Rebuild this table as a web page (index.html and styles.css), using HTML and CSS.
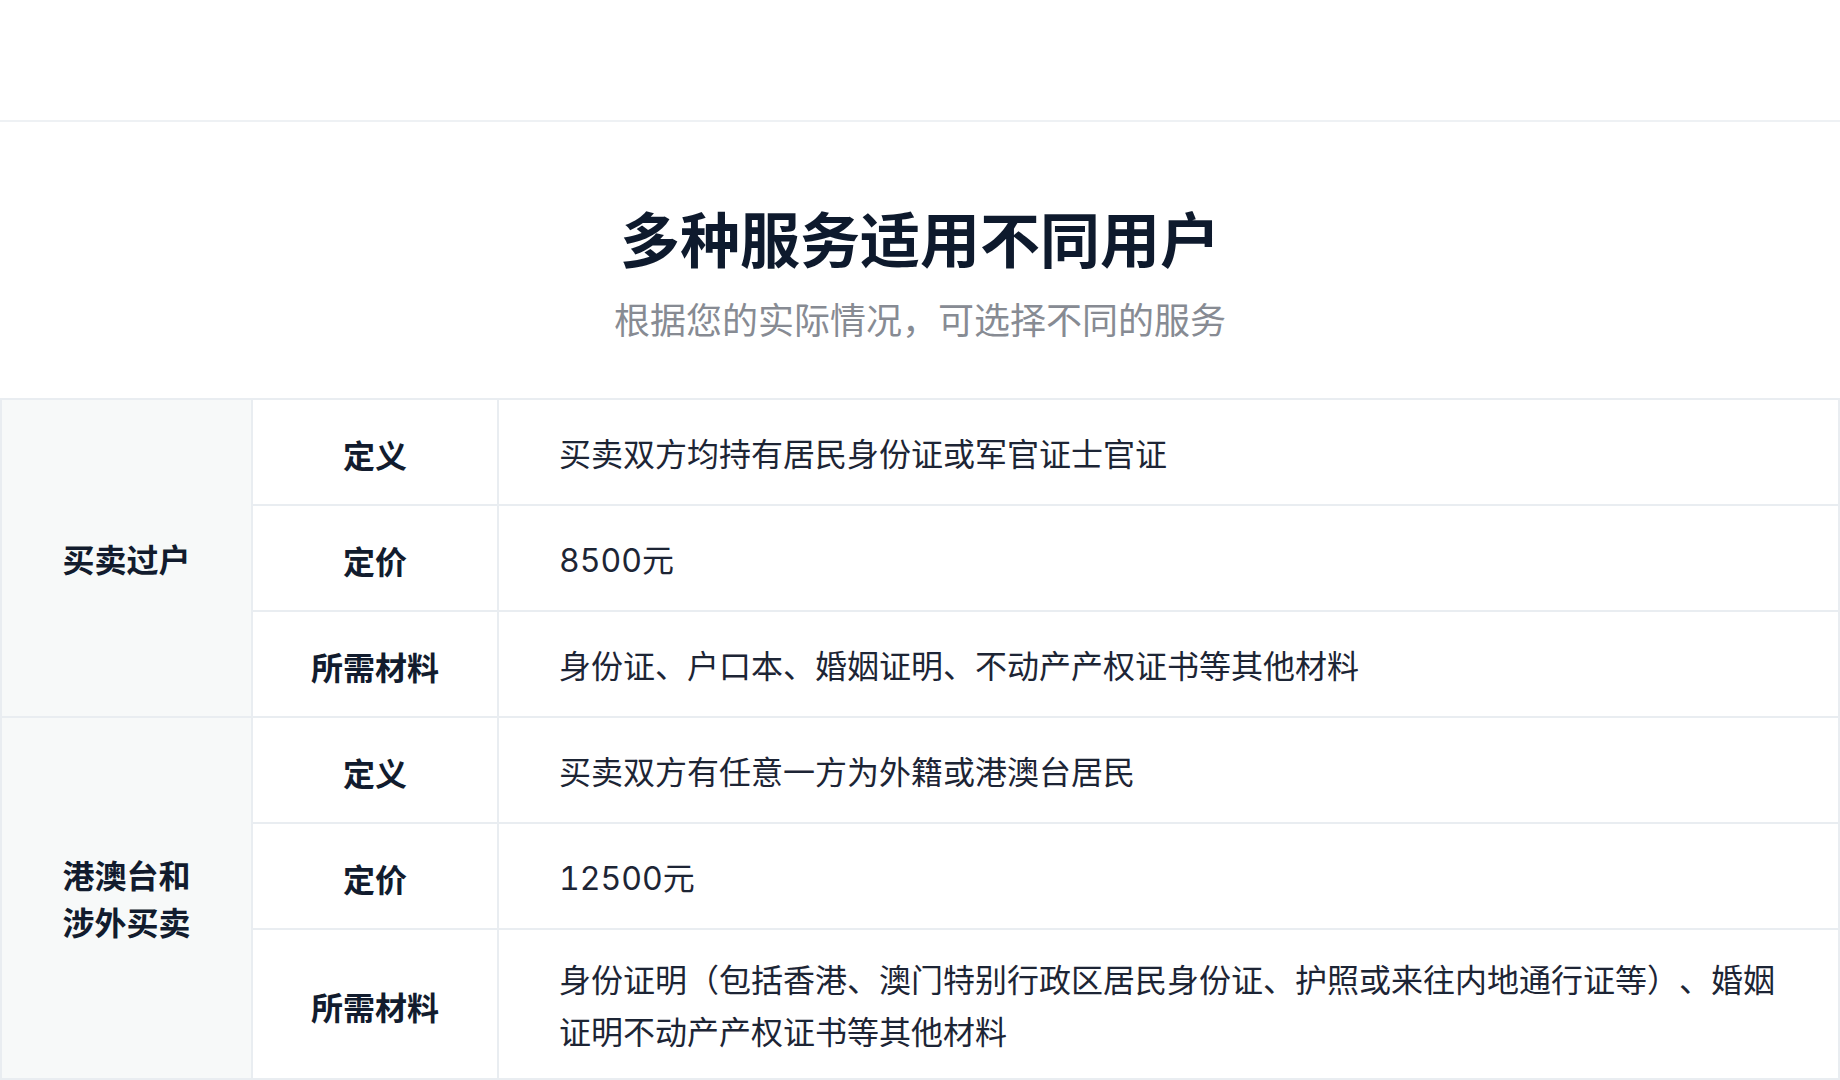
FILE: index.html
```html
<!DOCTYPE html>
<html lang="zh-CN">
<head>
<meta charset="utf-8">
<title>多种服务适用不同用户</title>
<link rel="stylesheet" href="styles.css">
</head>
<body>
<header class="topbar"></header>
<section class="services">
  <div class="intro">
    <h1 class="title">多种服务适用不同用户</h1>
    <p class="subtitle">根据您的实际情况，可选择不同的服务</p>
  </div>
  <table class="price-table">
    <colgroup>
      <col class="col-cat">
      <col class="col-label">
      <col class="col-text">
    </colgroup>
    <tbody>
      <tr>
        <th class="cat" rowspan="3">买卖过户</th>
        <th class="label">定义</th>
        <td class="text">买卖双方均持有居民身份证或军官证士官证</td>
      </tr>
      <tr>
        <th class="label">定价</th>
        <td class="text">8500元</td>
      </tr>
      <tr>
        <th class="label">所需材料</th>
        <td class="text">身份证、户口本、婚姻证明、不动产产权证书等其他材料</td>
      </tr>
      <tr>
        <th class="cat" rowspan="3">港澳台和涉外买卖</th>
        <th class="label">定义</th>
        <td class="text">买卖双方有任意一方为外籍或港澳台居民</td>
      </tr>
      <tr>
        <th class="label">定价</th>
        <td class="text">12500元</td>
      </tr>
      <tr>
        <th class="label">所需材料</th>
        <td class="text">身份证明（包括香港、澳门特别行政区居民身份证、护照或来往内地通行证等）、婚姻证明不动产产权证书等其他材料</td>
      </tr>
    </tbody>
  </table>
</section>
</body>
</html>
```
FILE: styles.css
```css
* { box-sizing: border-box; }
html, body {
  margin: 0;
  padding: 0;
  background: #ffffff;
}
body {
  font-family: "Noto Sans CJK SC", "Noto Sans", sans-serif;
  color: #1b2333;
  width: 1840px;
  text-spacing-trim: space-all;
}
.topbar {
  height: 122px;
  border-bottom: 2px solid #eef1f4;
  background: #ffffff;
}
.services {
  display: flex;
  flex-direction: column;
}
.intro {
  display: flex;
  flex-direction: column;
  align-items: center;
  padding-top: 73px;
  padding-bottom: 55px;
}
.title {
  margin: 0;
  font-size: 60px;
  line-height: 84px;
  font-weight: 700;
  color: #0e1a2d;
}
.subtitle {
  margin: 14px 0 0;
  font-size: 36px;
  line-height: 50px;
  font-weight: 400;
  color: #878b93;
}
.price-table {
  width: 1840px;
  border-collapse: collapse;
  table-layout: fixed;
  border: 2px solid #e9edf1;
}
.col-cat { width: 251px; }
.col-label { width: 246px; }
.price-table tr { height: 106px; }
.price-table th,
.price-table td {
  border: 2px solid #e9edf1;
  font-size: 32px;
  vertical-align: middle;
}
.cat {
  background: #f7f9f9;
  font-weight: 700;
  color: #121c2e;
  line-height: 47px;
  padding: 0 48px;
  text-align: center;
}
.label {
  font-weight: 700;
  color: #121c2e;
  line-height: 48px;
  padding: 4px 40px 0;
  text-align: center;
}
.text {
  font-family: "Inter", "Noto Sans CJK SC", sans-serif;
  font-variant-numeric: tabular-nums;
  font-weight: 400;
  color: #1d2535;
  line-height: 52px;
  padding: 25px 58px 19px 60px;
  text-align: left;
}
```
